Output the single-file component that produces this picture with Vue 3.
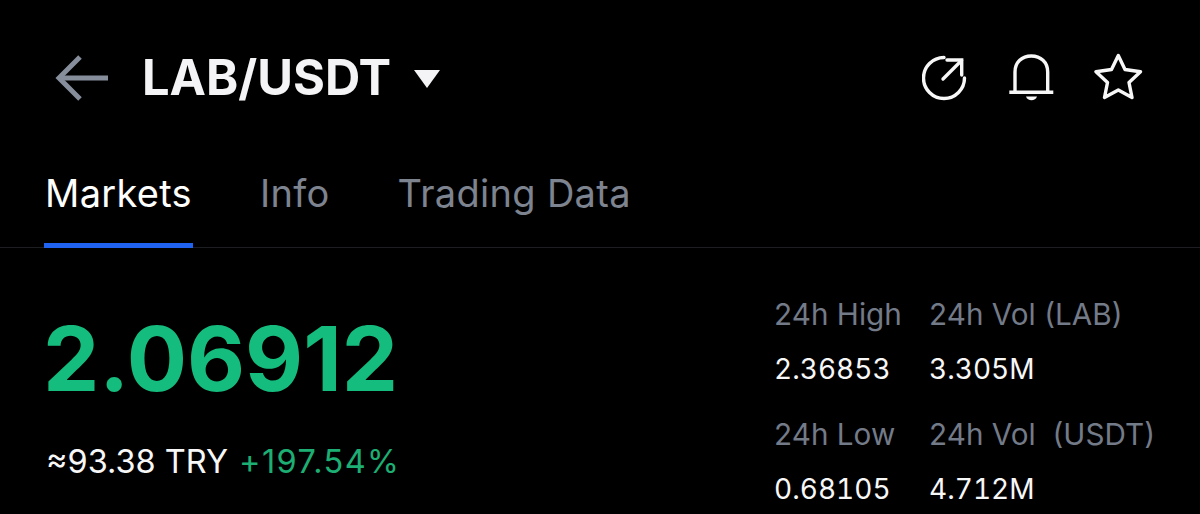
<script setup>
const tabs = ['Markets', 'Info', 'Trading Data']
const stats = [
  { label: '24h High', value: '2.36853' },
  { label: '24h Vol (LAB)', value: '3.305M' },
  { label: '24h Low', value: '0.68105' },
  { label: '24h Vol\u00a0 (USDT)', value: '4.712M' },
]
</script>

<template>
  <div class="page">
    <header class="top">
      <svg class="back" width="56" height="48" viewBox="0 0 56 48" fill="none" stroke="#868d9b" stroke-width="5">
        <path d="M54 25H5" />
        <path d="M26 4L5 25L26 46" />
      </svg>
      <h1 class="pair">LAB/USDT</h1>
      <span class="caret"></span>
      <div class="icons">
        <svg width="48" height="48" viewBox="0 0 48 48" fill="none" stroke="#f7f7f8" stroke-width="3.4" stroke-linecap="round">
          <path d="M22 4.500A20.500 20.500 0 1 0 42.500 25" />
          <path d="M21 26L39.500 7.500" />
          <path d="M25 7H39.700V22" />
        </svg>
        <svg width="48" height="48" viewBox="0 0 48 48" fill="none" stroke="#f7f7f8" stroke-width="3.4">
          <path d="M7 39V19C7 9 14 3 23.300 3S39.700 9 39.700 19V39" />
          <path d="M1.300 39.300H45.300" />
          <path d="M18 43.500H29C27.500 48.500 19.500 48.500 18 43.500Z" fill="#f7f7f8" stroke="none" />
        </svg>
        <svg width="50" height="48" viewBox="0 0 50 48" fill="none" stroke="#f7f7f8" stroke-width="3.4" stroke-linejoin="round">
          <path d="M24.300 2.500L31 16.500L46.500 18.700L35 29.500L38 44.500L24.300 37L10.500 44.500L13.500 29.500L2 18.700L17.500 16.500Z" />
        </svg>
      </div>
    </header>

    <nav class="tabs">
      <a v-for="(t, i) in tabs" :key="t" class="tab" :class="{ active: i === 0 }">{{ t }}</a>
    </nav>

    <section class="market">
      <div class="price-box">
        <div class="price">2.06912</div>
        <div class="sub">
          <span class="approx">≈93.38 TRY</span>
          <span class="change">+197.54%</span>
        </div>
      </div>
      <div class="stats">
        <div v-for="s in stats" :key="s.label" class="stat">
          <div class="label">{{ s.label }}</div>
          <div class="value">{{ s.value }}</div>
        </div>
      </div>
    </section>
  </div>
</template>

<style>
html, body {
  margin: 0;
  background: #000;
}
</style>

<style scoped>
.page {
  width: 1200px;
  height: 514px;
  overflow: hidden;
  background: #000;
  font-family: Inter, "Liberation Sans", sans-serif;
}

.top {
  display: flex;
  align-items: center;
  height: 48px;
  padding: 53px 56px 0 54px;
}

.back {
  flex: none;
}

.pair {
  margin: 2px 0 0 32px;
  font-size: 48.800px;
  line-height: 48px;
  font-weight: 700;
  color: #f4f4f6;
}

.caret {
  margin: 3px 0 0 23px;
  width: 0;
  height: 0;
  border-left: 13px solid transparent;
  border-right: 13px solid transparent;
  border-top: 18px solid #f4f4f6;
}

.icons {
  margin-left: auto;
  display: flex;
  gap: 38px;
}

.tabs {
  display: flex;
  gap: 66px;
  margin-top: 62px;
  padding-left: 44px;
  height: 85px;
  box-sizing: border-box;
  border-bottom: 1px solid #1d1e22;
}

.tab {
  height: 85px;
  box-sizing: border-box;
  padding: 9px 1px 0;
  font-size: 38px;
  line-height: 42px;
  letter-spacing: 0.300px;
  color: #7d838f;
  white-space: nowrap;
}

.tab.active {
  color: #fff;
  border-bottom: 5px solid #1f63f0;
  margin-bottom: -1px;
}

.market {
  display: flex;
  justify-content: space-between;
  padding: 0 45px 0 43px;
}

.price {
  margin-top: 61px;
  font-size: 89.500px;
  line-height: 100px;
  font-weight: 700;
  color: #14bd7d;
}

.sub {
  margin-top: 33px;
  margin-left: 3px;
  display: flex;
  gap: 11px;
  font-size: 32.500px;
  line-height: 40px;
}

.approx {
  color: #f7f7f8;
}

.change {
  color: #1cae73;
  letter-spacing: 1.400px;
}

.stats {
  display: grid;
  grid-template-columns: 155px auto;
  margin-top: 46px;
  row-gap: 25px;
}

.label {
  font-size: 29.700px;
  line-height: 40px;
  color: #737a88;
  white-space: nowrap;
}

.value {
  margin-top: 15px;
  font-size: 28px;
  line-height: 40px;
  font-variant-numeric: tabular-nums;
  color: #f7f7f8;
}
</style>
